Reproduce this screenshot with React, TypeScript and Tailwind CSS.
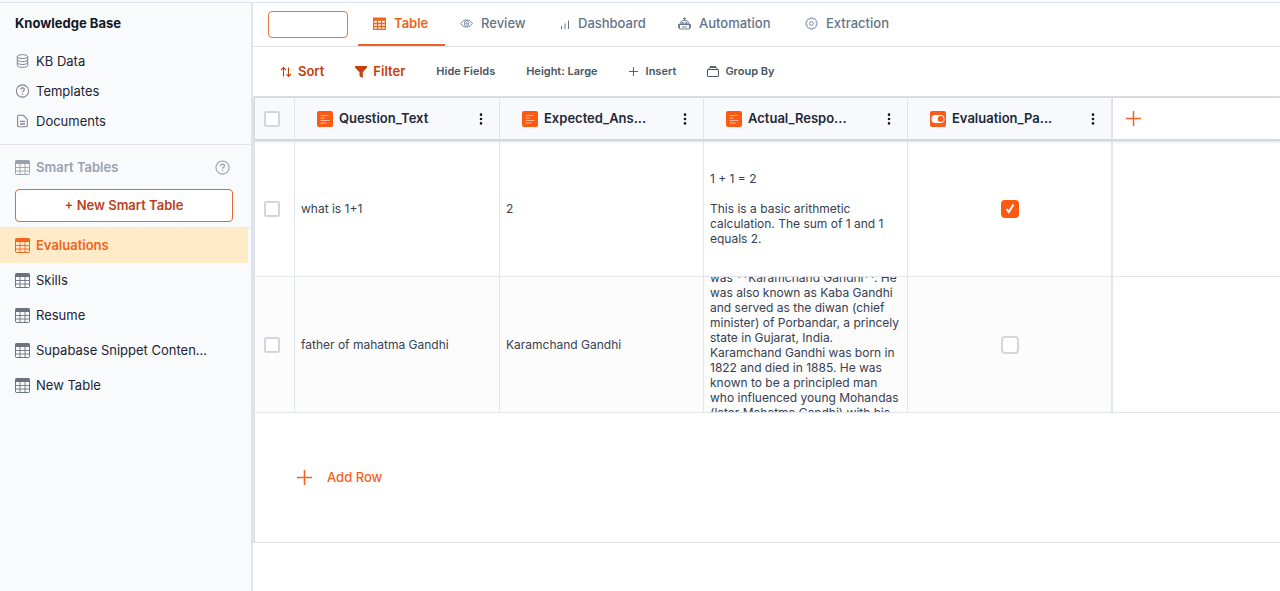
import React from "react";
import clsx from "clsx";
import { BsThreeDotsVertical } from "react-icons/bs";

// ============================================================================
// Icons
// ============================================================================

type IconProps = { className?: string };

function DatabaseIcon({ className }: IconProps) {
  return (
    <svg viewBox="0 0 12 14" fill="none" stroke="currentColor" className={className}>
      <ellipse cx="6" cy="2.6" rx="5.2" ry="2" />
      <path d="M.8 2.6v8.8c0 1.1 2.3 2 5.2 2s5.2-.9 5.2-2V2.6M.8 5.6c0 1.1 2.3 2 5.2 2s5.2-.9 5.2-2M.8 8.5c0 1.1 2.3 2 5.2 2s5.2-.9 5.2-2" />
    </svg>
  );
}

function HelpIcon({ className }: IconProps) {
  return (
    <svg viewBox="0 0 16 16" fill="none" stroke="currentColor" strokeWidth="1.2" className={className}>
      <circle cx="8" cy="8" r="7" />
      <path d="M5.9 6.3c0-1.2.9-2 2.1-2s2.1.8 2.1 1.9c0 1.6-2.1 1.7-2.1 3.2" strokeWidth="1.4" />
      <circle cx="8" cy="11.4" r=".5" fill="currentColor" strokeWidth=".7" />
    </svg>
  );
}

function DocumentIcon({ className }: IconProps) {
  return (
    <svg viewBox="0 0 12 14" fill="none" stroke="currentColor" strokeWidth="1.1" className={className}>
      <path d="M2.4 1.3h4.4l4 4v6.2c0 .8-.5 1.3-1.3 1.3H2.4c-.8 0-1.3-.5-1.3-1.3V2.6c0-.8.5-1.3 1.3-1.3z" />
      <path d="M3.5 7.4h5M3.5 10h5" strokeWidth="1.3" />
    </svg>
  );
}

function GridIcon({ className }: IconProps) {
  return (
    <svg viewBox="0 0 15 15" fill="none" stroke="currentColor" className={className}>
      <rect x=".5" y=".5" width="14" height="14" rx="1" />
      <path d="M.5.5h14V4H.5z" fill="currentColor" stroke="none" />
      <path d="M1 7.5h13M1 11h13M5 4v10.5M10 4v10.5" strokeWidth=".9" />
    </svg>
  );
}

function TableTabIcon({ className }: IconProps) {
  return (
    <svg viewBox="0 0 13 13" fill="none" stroke="currentColor" className={className}>
      <path d="M0 .5h13v3.300H0z" fill="currentColor" stroke="none" />
      <path d="M.6 3v9.400h11.800V3M0 6.500h13M0 9.500h13M4.500 3v9.500M8.500 3v9.500" strokeWidth="1.300" />
    </svg>
  );
}

function EyeIcon({ className }: IconProps) {
  return (
    <svg viewBox="0 0 14 14" fill="none" stroke="currentColor" strokeWidth=".9" className={className}>
      <path d="M.7 7C2 4.600 4.300 3.200 7 3.200S12 4.600 13.300 7C12 9.400 9.700 10.800 7 10.800S2 9.400.7 7z" />
      <ellipse cx="7" cy="7" rx="2.300" ry="3.200" />
      <circle cx="7" cy="7" r=".8" />
    </svg>
  );
}

function BarsIcon({ className }: IconProps) {
  return (
    <svg viewBox="0 0 13 13" fill="none" stroke="currentColor" className={className}>
      <path d="M4.500 9v3M8 6.500V12M11.500 3.500V12" />
    </svg>
  );
}

function RobotIcon({ className }: IconProps) {
  return (
    <svg viewBox="0 0 13 13" fill="none" stroke="currentColor" strokeWidth=".9" className={className}>
      <path d="M6.500.5v3M5 1.500h3" />
      <path d="M2.500 6c0-1.700 1.500-2.700 4-2.700s4 1 4 2.700M1.500 7v5h10V7M.5 7v4M12.500 7v4M4 10h5" />
      <path d="M1.500 7.200h10" strokeWidth="1.700" />
      <circle cx="4.700" cy="5.500" r=".5" fill="currentColor" />
      <circle cx="8.300" cy="5.500" r=".5" fill="currentColor" />
    </svg>
  );
}

function GearIcon({ className }: IconProps) {
  return (
    <svg viewBox="0 0 14 14" fill="none" stroke="currentColor" strokeWidth=".9" className={className}>
      <path d="M5.700 1h2.600l.5 1.500 1.500-.7 1.900 1.900-.7 1.500 1.500.5v2.600l-1.500.5.7 1.500-1.900 1.900-1.500-.7-.5 1.500H5.700l-.5-1.500-1.500.7-1.900-1.900.7-1.500L1 8.300V5.700l1.500-.5-.7-1.500 1.900-1.900 1.500.7z" />
      <circle cx="7" cy="7" r="2" />
    </svg>
  );
}

function SortIcon({ className }: IconProps) {
  return (
    <svg viewBox="0 0 12 12" fill="none" stroke="currentColor" strokeWidth="1.100" className={className}>
      <path d="M3.500 10.500v-9M1 4l2.500-2.500L6 4M8.500 1.500v9M6.500 8l2 2.500L11 8" />
    </svg>
  );
}

function FunnelIcon({ className }: IconProps) {
  return (
    <svg viewBox="0 0 12 12" fill="currentColor" className={className}>
      <path d="M0 0h12v1.500L7.800 6.200V12L4.500 10.200v-4L0 1.500z" />
    </svg>
  );
}

function PlusIcon({ className }: IconProps) {
  return (
    <svg viewBox="0 0 15 15" fill="none" stroke="currentColor" strokeWidth="1.500" className={className}>
      <path d="M7.500 0v15M0 7.500h15" />
    </svg>
  );
}

function GroupIcon({ className }: IconProps) {
  return (
    <svg viewBox="0 0 12 11" fill="none" stroke="currentColor" className={className}>
      <rect x=".5" y="3.500" width="11" height="7" rx=".5" />
      <path d="M1.500 3.500l1-2h7l1 2M3 .5h6" strokeWidth=".9" />
    </svg>
  );
}

function TextFieldIcon({ className }: IconProps) {
  return (
    <svg viewBox="0 0 16 16" className={className}>
      <rect width="16" height="16" rx="2" fill="#fc5a12" />
      <path d="M3.500 4.500h8M3.500 7h4M3.500 9.500h9M3.500 12h6" stroke="#ffc3a6" strokeWidth=".9" fill="none" />
    </svg>
  );
}

function ToggleFieldIcon({ className }: IconProps) {
  return (
    <svg viewBox="0 0 16 16" className={className}>
      <rect width="16" height="16" rx="2" fill="#f95d1b" />
      <rect x="1.500" y="4" width="13" height="8" rx="4" fill="#fff" />
      <circle cx="10.700" cy="8" r="3" fill="#f95d1b" />
    </svg>
  );
}

// ============================================================================
// Data
// ============================================================================

const KB_LINKS = [
  { label: "KB Data", icon: DatabaseIcon },
  { label: "Templates", icon: HelpIcon },
  { label: "Documents", icon: DocumentIcon },
];

const SMART_TABLES = [
  "Evaluations",
  "Skills",
  "Resume",
  "Supabase Snippet Conten...",
  "New Table",
];

const TABS = [
  { label: "Table", icon: TableTabIcon, width: "w-[87px]" },
  { label: "Review", icon: EyeIcon, width: "w-[97px]" },
  { label: "Dashboard", icon: BarsIcon, width: "w-[121px]" },
  { label: "Automation", icon: RobotIcon, width: "w-[127px]" },
  { label: "Extraction", icon: GearIcon, width: "w-[114px]" },
];

const COLUMNS = [
  { label: "Question_Text", icon: TextFieldIcon },
  { label: "Expected_Ans...", icon: TextFieldIcon },
  { label: "Actual_Respo...", icon: TextFieldIcon },
  { label: "Evaluation_Pa...", icon: ToggleFieldIcon },
];

const ROWS = [
  {
    question: "what is 1+1",
    expected: "2",
    actual:
      "1 + 1 = 2\n\nThis is a basic arithmetic\ncalculation. The sum of 1 and 1\nequals 2.",
    passed: true,
  },
  {
    question: "father of mahatma Gandhi",
    expected: "Karamchand Gandhi",
    actual:
      "was **Karamchand Gandhi**. He\nwas also known as Kaba Gandhi\nand served as the diwan (chief\nminister) of Porbandar, a princely\nstate in Gujarat, India.\nKaramchand Gandhi was born in\n1822 and died in 1885. He was\nknown to be a principled man\nwho influenced young Mohandas\n(later Mahatma Gandhi) with his",
    passed: false,
  },
];

// ============================================================================
// Components
// ============================================================================

function SelectBox({ label }: { label: string }) {
  return (
    <input
      type="checkbox"
      aria-label={label}
      className="block size-4 appearance-none rounded-xs border-2 border-[#d3d6da] bg-white"
    />
  );
}

function PassedBox({ label, checked }: { label: string; checked: boolean }) {
  return (
    <span className="relative mx-auto block size-[18px]">
      <input
        type="checkbox"
        aria-label={label}
        defaultChecked={checked}
        className="peer block size-[18px] appearance-none rounded border-2 border-[#d3d6da] bg-white checked:border-[#fc5a12] checked:bg-[#fc5a12]"
      />
      <svg
        viewBox="0 0 18 18"
        fill="none"
        stroke="#fff"
        strokeWidth="2"
        className="pointer-events-none absolute inset-0 hidden size-[18px] peer-checked:block"
      >
        <path d="M5.500 9l2.300 3L12.500 4.500" />
      </svg>
    </span>
  );
}

function Sidebar() {
  return (
    <aside className="w-[253px] shrink-0 border-r-2 border-[#dfe3ec] bg-[#f9fafc]">
      <h2 className="px-[15px] pt-2.5 text-[13px] leading-5 font-bold text-[#101828]">
        Knowledge Base
      </h2>
      <nav className="flex flex-col gap-2.5 px-[15px] pt-[18px] pb-[13px]">
        {KB_LINKS.map(({ label, icon: Icon }) => (
          <a key={label} href="#" className="flex items-center gap-1.5 text-[13px] leading-5 text-[#1d2433]">
            <Icon className="h-3.5 w-[15px] text-[#7d8492]" />
            {label}
          </a>
        ))}
      </nav>

      <div className="border-t border-[#dfe3ec] px-[15px] pt-3">
        <div className="flex items-center gap-1.5 text-[13px] leading-5 font-semibold text-[#9aa1af]">
          <GridIcon className="size-[15px]" />
          Smart Tables
          <button type="button" aria-label="About smart tables" className="mr-1.5 ml-auto">
            <HelpIcon className="size-[15px]" />
          </button>
        </div>
        <button
          type="button"
          className="mt-3 h-[33px] w-[218px] rounded border border-[#e26a36] bg-white text-[13px] font-semibold text-[#b9431a]"
        >
          + New Smart Table
        </button>
      </div>

      <nav className="mt-[5px] border-t border-[#e6e9f0]">
        {SMART_TABLES.map((name, i) => (
          <a
            key={name}
            href="#"
            className={clsx(
              "mr-[3px] flex h-[35px] items-center gap-1.5 px-[15px] text-[13px]",
              i === 0 ? "bg-[#ffebc8] font-semibold text-[#f0641e]" : "text-[#1d2433]",
            )}
          >
            <GridIcon className={clsx("size-[15px]", i !== 0 && "text-[#6b7280]")} />
            {name}
          </a>
        ))}
      </nav>
    </aside>
  );
}

function TabBar() {
  return (
    <div className="flex h-11 items-start border-b border-[#dfe3e8] pl-[15px]">
      <button
        type="button"
        aria-label="Workspace"
        className="mt-2 mr-2.5 h-[27px] w-20 rounded border border-[#e8743f] bg-white"
      />
      {TABS.map(({ label, icon: Icon, width }, i) => (
        <button
          key={label}
          type="button"
          className={clsx(
            "flex h-[43px] items-center gap-2 border-b-2 pl-[15px] text-[13px]",
            width,
            i === 0
              ? "border-[#ee6127] font-semibold text-[#f0641e]"
              : "border-transparent font-medium text-[#64748b]",
          )}
        >
          <Icon className="size-[13px]" />
          {label}
        </button>
      ))}
    </div>
  );
}

function Toolbar() {
  return (
    <div className="flex h-[49px] items-center gap-[31px] pl-[27px] text-[11px] font-semibold text-[#4b5563]">
      <button type="button" className="flex items-center gap-1.5 text-[13px] text-[#c2410c]">
        <SortIcon className="size-3" />
        Sort
      </button>
      <button type="button" className="flex items-center gap-1.5 text-[13px] text-[#c2410c]">
        <FunnelIcon className="size-3" />
        Filter
      </button>
      <button type="button">Hide Fields</button>
      <button type="button">Height: Large</button>
      <button type="button" className="flex items-center gap-2">
        <PlusIcon className="size-[9px]" />
        Insert
      </button>
      <button type="button" className="flex items-center gap-1.5">
        <GroupIcon className="h-[11px] w-3" />
        Group By
      </button>
    </div>
  );
}

function DataTable() {
  return (
    <div className="border-y border-l-2 border-[#dfe3e8]">
      <table className="w-full table-fixed border-separate border-spacing-0 text-left text-[#374151]">
        <colgroup>
          <col className="w-10" />
          <col className="w-[205px]" />
          <col className="w-[204px]" />
          <col className="w-[204px]" />
          <col className="w-[205px]" />
          <col />
        </colgroup>
        <thead className="shadow-sm">
          <tr className="h-11">
            <th className="border-t border-r border-b-2 border-[#d3d8de] border-r-[#e2e6ec] bg-[#f8f9fc] pl-[9px]">
              <SelectBox label="Select all rows" />
            </th>
            {COLUMNS.map(({ label, icon: Icon }, i) => (
              <th
                key={label}
                className={clsx(
                  "border-t border-b-2 border-[#d3d8de] border-r-[#dfe2e8] bg-[#f8f9fc] pr-[11px] pl-[22px]",
                  i === 3 ? "border-r-2" : "border-r",
                )}
              >
                <div className="flex items-center gap-1.5">
                  <Icon className="size-4 shrink-0" />
                  <span className="text-[13px] font-semibold text-[#1f2937]">{label}</span>
                  <button type="button" aria-label={`${label} options`} className="ml-auto text-[#111827]">
                    <BsThreeDotsVertical className="size-3.5" />
                  </button>
                </div>
              </th>
            ))}
            <th className="border-t border-b-2 border-[#d3d8de] pl-[13px]">
              <button type="button" aria-label="Add column" className="block text-[#f4622a]">
                <PlusIcon className="size-[15px]" />
              </button>
            </th>
          </tr>
        </thead>
        <tbody>
          {ROWS.map((row, i) => (
            <tr
              key={row.question}
              className={clsx(
                "text-xs [&>td]:border-b [&>td]:border-[#e2e6ec]",
                i % 2 === 1 && "[&>td:not(:last-child)]:bg-[#fcfcfc]",
              )}
            >
              <td className="border-r pl-[9px]">
                <SelectBox label={`Select row ${i + 1}`} />
              </td>
              <td className="border-r px-1.5">{row.question}</td>
              <td className="border-r px-1.5">{row.expected}</td>
              <td className="border-r px-1.5 py-0">
                <div className="flex h-[135px] items-center overflow-hidden leading-[15px] whitespace-pre">
                  {row.actual}
                </div>
              </td>
              <td className="border-r-2">
                <PassedBox label={`Evaluation passed, row ${i + 1}`} checked={row.passed} />
              </td>
              <td />
            </tr>
          ))}
        </tbody>
      </table>
      <div className="flex h-[129px] items-center pl-[42px]">
        <button type="button" className="flex items-center gap-[15px] text-[13px] font-medium text-[#f0641e]">
          <PlusIcon className="size-[15px]" />
          Add Row
        </button>
      </div>
    </div>
  );
}

export default function App() {
  return (
    <div className="flex min-h-screen flex-col bg-white font-['Inter',sans-serif]">
      <div className="h-[3px] border-b border-[#dfe3ec] bg-[#f9fafc]" />
      <div className="flex grow">
        <Sidebar />
        <main className="min-w-0 grow">
          <TabBar />
          <Toolbar />
          <DataTable />
        </main>
      </div>
    </div>
  );
}
